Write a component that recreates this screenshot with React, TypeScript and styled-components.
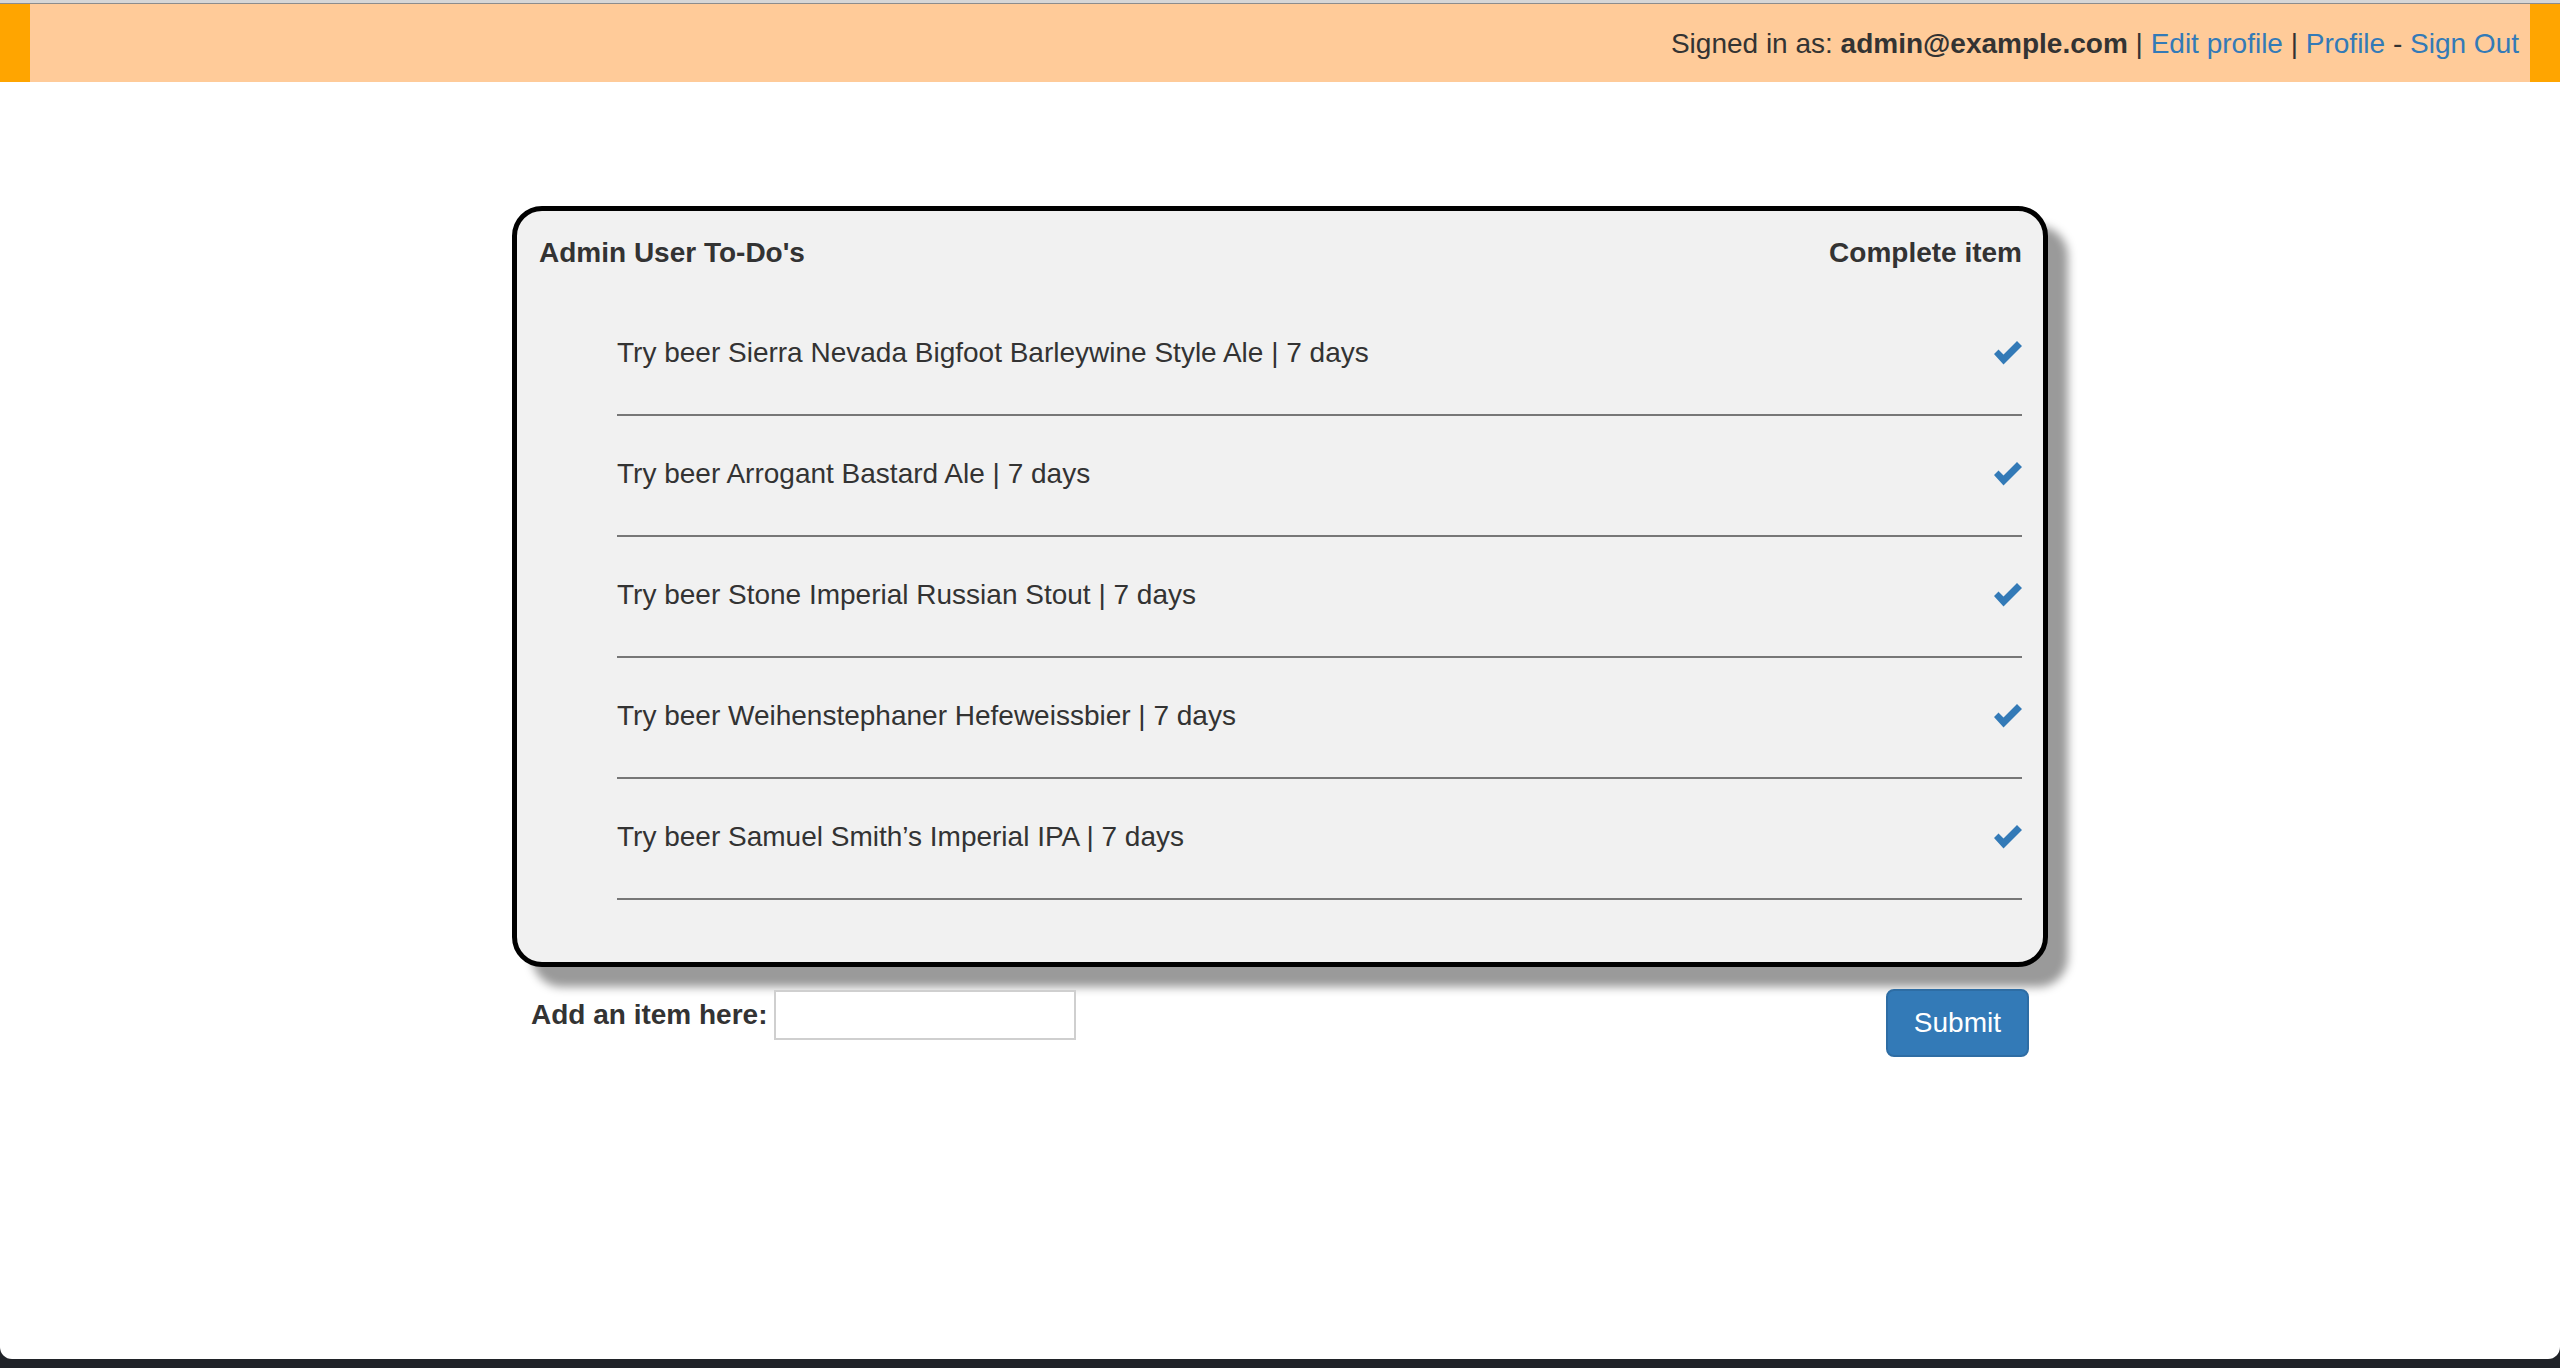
import React, {useState} from 'react';
import styled, {createGlobalStyle} from 'styled-components';

const GlobalStyle = createGlobalStyle`
html, body {
    margin: 0;
    padding: 0;
    background-color: #202328;
}
body {
    font-family: "Liberation Sans", Arial, Helvetica, sans-serif;
    font-size: 28px;
    line-height: 40px;
    color: #333;
}
* {
    box-sizing: border-box;
}
`

const Window = styled.div`
height: 1359px;
background-color: #fff;
border-radius: 0 0 12px 12px;
overflow: hidden;
`
const Chrome = styled.div`
height: 4px;
background-color: #d6d6d6;
border-bottom: 1px solid #8c8c8c;
`
const TopBar = styled.div`
height: 78px;
display: flex;
justify-content: flex-end;
align-items: center;
padding: 1px 11px 0 0;
background-color: #ffcb99;
border-left: 30px solid #ffa500;
border-right: 30px solid #ffa500;
white-space: pre;
`
const Link = styled.a`
color: #337ab7;
text-decoration: none;
cursor: pointer;
`
const Main = styled.div`
padding-top: 124px;
`
const Card = styled.div`
width: 1536px;
margin: 0 auto;
padding: 22px 21px 62px 22px;
background-color: #f1f1f1;
border: 5px solid #000;
border-radius: 30px;
box-shadow: 20px 20px 10px #9a9a9a;
`
const CardHead = styled.div`
display: flex;
justify-content: space-between;
font-weight: bold;
`
const List = styled.ul`
list-style: none;
margin: 22px 0 0 78px;
padding: 0;
`
const Row = styled.li`
display: flex;
justify-content: space-between;
align-items: center;
padding: 38px 0 41px;
border-bottom: 2px solid #777;
`
const CheckButton = styled.button`
display: flex;
padding: 0;
border: none;
background: none;
cursor: pointer;
`
const FormRow = styled.form`
width: 1536px;
margin: 22px auto 0;
padding: 0 19px;
display: flex;
justify-content: space-between;
align-items: flex-start;
`
const Field = styled.label`
display: flex;
align-items: center;
gap: 7px;
margin-top: 1px;
font-weight: bold;
`
const Input = styled.input`
width: 302px;
height: 50px;
border: 2px solid #cfcfcf;
background: #fff;
font: inherit;
font-weight: normal;
padding: 0 8px;
outline: none;
`
const SubmitButton = styled.button`
height: 68px;
padding: 0 26px;
border: 2px solid #2e6da4;
border-radius: 8px;
background-color: #337ab7;
color: #fff;
font-family: inherit;
font-size: 28px;
cursor: pointer;
`

function Check() {
    return (
        <svg width="28" height="24" viewBox="0 0 28 24">
            <polygon points="0,13 4.5,8.5 9.5,13.5 23,0 28,5 9.5,23.5" fill="#337ab7"/>
        </svg>
    )
}

const beers = [
    'Sierra Nevada Bigfoot Barleywine Style Ale',
    'Arrogant Bastard Ale',
    'Stone Imperial Russian Stout',
    'Weihenstephaner Hefeweissbier',
    'Samuel Smith\u2019s Imperial IPA',
]

export default function App() {
    const [items, setItems] = useState(beers.map(b => `Try beer ${b} | 7 days`))
    const [text, setText] = useState('')

    const submitHandle = (e: React.FormEvent) => {
        e.preventDefault()
        if (text.trim()) {
            setItems([...items, text.trim()])
            setText('')
        }
    }

    return (
        <>
            <GlobalStyle/>
            <Window>
                <Chrome/>
                <TopBar>
                    Signed in as: <b>admin@example.com</b> | <Link>Edit profile</Link> | <Link>Profile</Link> - <Link>Sign Out</Link>
                </TopBar>
                <Main>
                    <Card>
                        <CardHead>
                            <span>Admin User To-Do's</span>
                            <span>Complete item</span>
                        </CardHead>
                        <List>
                            {items.map((item, i) => (
                                <Row key={i}>
                                    <span>{item}</span>
                                    <CheckButton onClick={() => setItems(items.filter((_, j) => j !== i))}>
                                        <Check/>
                                    </CheckButton>
                                </Row>
                            ))}
                        </List>
                    </Card>
                    <FormRow onSubmit={submitHandle}>
                        <Field>
                            Add an item here:
                            <Input value={text} onChange={e => setText(e.target.value)}/>
                        </Field>
                        <SubmitButton type="submit">Submit</SubmitButton>
                    </FormRow>
                </Main>
            </Window>
        </>
    );
}
